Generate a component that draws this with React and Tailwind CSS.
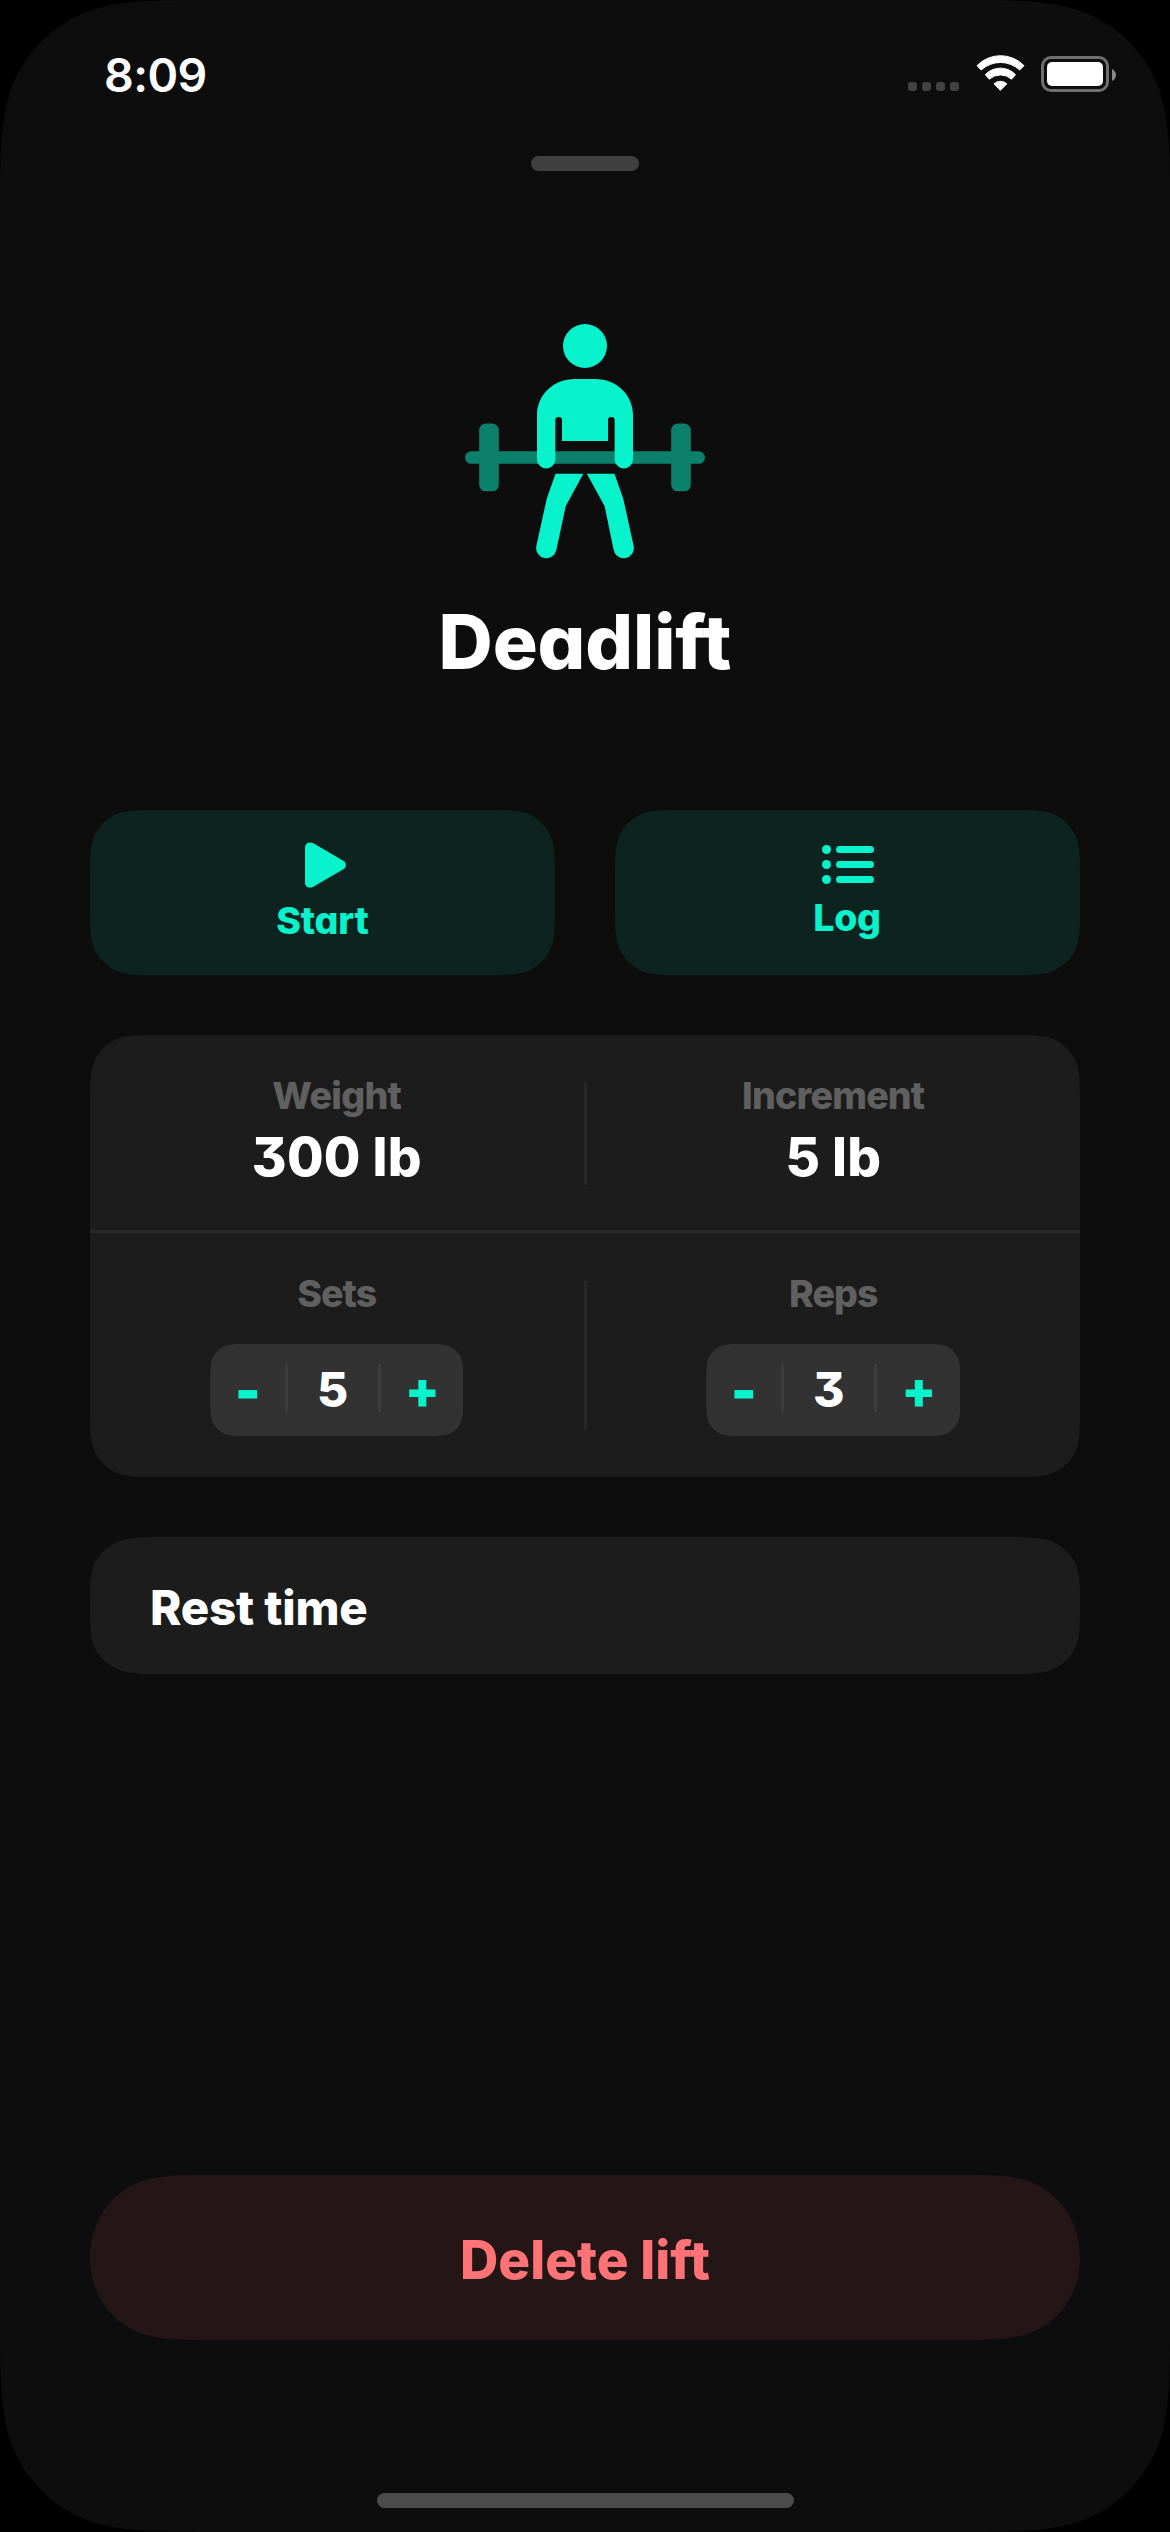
import React from "react";

// Outline of a rectangle with continuous (smoothed) corners.
// With capsule set, only the horizontal side of each corner is smoothed.
function continuousPath(w, h, r, capsule = false) {
  const a = 1.528665 * r;
  const v = capsule ? h / 2 : Math.min(a, h / 2);
  const k = v / a;
  const X = (n) => n * r;
  const Y = (n) => n * r * k;
  const corner = capsule
    ? [[a, 0], [X(1.0885), 0], [X(0.8684), 0], [X(0.6315), r * 0.0749], [X(0.26), r * 0.205], [0, r * 0.56], [0, h / 2]]
    : [
        [a, 0],
        [X(1.08849), 0],
        [X(0.86841), 0],
        [X(0.63149), Y(0.07491)],
        [X(0.37282), Y(0.16906)],
        [X(0.16906), Y(0.37282)],
        [X(0.07491), Y(0.63149)],
        [0, Y(0.86841)],
        [0, Y(1.08849)],
        [0, v],
      ];
  const rev = [...corner].reverse();
  const curve = (pts) => {
    let s = "";
    for (let i = 1; i < pts.length; i += 3) {
      s += "C" + pts.slice(i, i + 3).map(([x, y]) => x.toFixed(2) + " " + y.toFixed(2)).join(" ");
    }
    return s;
  };
  const fx = (p) => p.map(([x, y]) => [w - x, y]);
  const fy = (p) => p.map(([x, y]) => [x, h - y]);
  return (
    `M${w - a} 0` + curve(fx(corner)) + `L${w} ${h - v}` + curve(fx(fy(rev))) +
    `L${a} ${h}` + curve(fy(corner)) + `L0 ${v}` + curve(rev) + "Z"
  );
}

function Smooth({ w, h, r, capsule, as: Tag = "div", className, children }) {
  return (
    <Tag className={className} style={{ width: w, height: h, clipPath: `path("${continuousPath(w, h, r, capsule)}")` }}>
      {children}
    </Tag>
  );
}

function WifiIcon() {
  return (
    <svg className="h-[36px] w-[49px]" viewBox="344 105 147 108" fill="#fff" stroke="#fff" strokeWidth="3" strokeLinejoin="round">
      <path d="M347 137.500A98 98 0 0 1 488 137.500L475 150.500A85 85 0 0 0 359.500 150.500Z" transform="translate(0 -.5)" />
      <path d="M372 164A62 62 0 0 1 462.500 164L450.500 177.500A50 50 0 0 0 384 177.500Z" />
      <path d="M398 191.500A28 28 0 0 1 436.500 191.500L417 211Z" />
    </svg>
  );
}

function StatusBar() {
  return (
    <div className="flex h-[149px] items-center justify-between pr-[54px] pl-[104px]">
      <span className="text-[46.500px] leading-[56px] font-semibold tracking-[-0.6px]">8:09</span>
      <div className="flex items-center">
        <div className="mt-[24px] flex gap-[5px]">
          {[0, 1, 2, 3].map((i) => (
            <span key={i} className="size-[9px] rounded-[3px] bg-[#424242]" />
          ))}
        </div>
        <div className="mt-[-3px] ml-[17px]">
          <WifiIcon />
        </div>
        <div className="-mt-[1px] ml-[16px] h-[36px] w-[68px] rounded-[10px] border-3 border-[#6f6f6f] p-[3px]">
          <div className="h-full rounded-[5px] bg-white" />
        </div>
        <svg className="ml-[3px] h-[12px] w-[4px]" viewBox="0 0 4 12" fill="#878787">
          <path d="M0 0C2.500 1 4 3.500 4 6S2.500 11 0 12Z" />
        </svg>
      </div>
    </div>
  );
}

function DeadliftIcon() {
  return (
    <svg className="h-[236px] w-[240px]" viewBox="75 69 720 708" fill="#08F3CB">
      <g fill="#0B806B">
        <rect x="75" y="453.500" width="720" height="38" rx="19" />
        <rect x="117.500" y="370.500" width="59" height="203.500" rx="20" />
        <rect x="693.500" y="370.500" width="59" height="203.500" rx="20" />
      </g>
      <circle cx="435" cy="138" r="66" />
      <path d="M405 237H465C530 237 579 285 579 345V478A27.500 27.500 0 0 1 524 478V361A10 10 0 0 0 504 361V423H366V361A10 10 0 0 0 346 361V478A27.500 27.500 0 0 1 291 478V345C291 285 340 237 405 237Z" />
      <path d="M346.500 521.500H430L377 619L349 750A30.500 30.500 0 0 1 289 738L320 597Z" />
      <path d="M523.500 521.500H440.500L494 619L521 750A30.500 30.500 0 0 0 581 738L550 597Z" />
    </svg>
  );
}

function PlayIcon() {
  return (
    <svg className="h-[46px] w-[41px]" viewBox="0 0 123 136" fill="#08F3CB">
      <path d="M0 15C0 3 11-4 25 3L115 55C125 61 125 74 115 81L25 133C11 140 0 133 0 121Z" />
    </svg>
  );
}

function ListIcon() {
  return (
    <svg className="h-[39px] w-[52px]" viewBox="0 0 156 117" fill="#08F3CB">
      {[13.5, 58.5, 103.5].map((y) => (
        <g key={y}>
          <circle cx="13.500" cy={y} r="13.500" />
          <rect x="42" y={y - 10.5} width="114" height="21" rx="10.500" />
        </g>
      ))}
    </svg>
  );
}

function Stepper({ value, w }) {
  return (
    <Smooth w={w} h={92} r={24} className="flex items-center bg-[#323232]">
      <button className="flex w-[75px] items-center justify-center text-[#08F3CB]">
        <span className="-mt-[1px] scale-x-[1.1] scale-y-[1.15] text-[50px] leading-[60px] font-black">-</span>
      </button>
      <span className="-mt-[4px] h-[48px] w-[3px] bg-[#3d3d3d]" />
      <span className="-mt-[1px] w-[90px] pr-[1px] text-center text-[48px] leading-[60px] font-extrabold">{value}</span>
      <span className="-mt-[4px] h-[48px] w-[3px] bg-[#3d3d3d]" />
      <button className="flex flex-1 items-center justify-center text-[#08F3CB]">
        <span className="-mt-[1px] text-[50px] leading-[60px] font-black">+</span>
      </button>
    </Smooth>
  );
}

const label = "text-[37.500px] leading-[44px] font-extrabold text-[#606060]";
const amount = "mt-[12px] text-[53px] leading-[54px] font-extrabold tracking-[0.2px]";

export default function App() {
  return (
    <div className="h-[2532px] w-[1170px] overflow-hidden bg-black font-['Inter',sans-serif] text-white [font-feature-settings:'cv09','cv11','calt'_0]">
      <Smooth w={1170} h={2532} r={142} className="flex flex-col bg-[#0D0D0D]">
        <StatusBar />
        <div className="mt-[7px] h-[15px] w-[108px] self-center rounded-full bg-[#404040]" />
        <div className="mt-[152px] self-center">
          <DeadliftIcon />
        </div>
        <h1 className="mt-[37px] text-center text-[75px] leading-[91px] font-extrabold tracking-[-0.1px]">Deadlift</h1>

        <div className="mt-[123px] flex gap-[60px] px-[90px] text-[37.500px] leading-[44px] font-extrabold text-[#08F3CB]">
          <Smooth as="button" w={465} h={165} r={45} className="flex flex-col items-center bg-[#0C231F] pt-[32px]">
            <span className="pl-[6px]">
              <PlayIcon />
            </span>
            <span className="mt-[11px] tracking-[-0.2px]">Start</span>
          </Smooth>
          <Smooth as="button" w={465} h={165} r={45} className="flex flex-col items-center bg-[#0C231F] pt-[35px]">
            <ListIcon />
            <span className="mt-[12px] pr-[1px] tracking-[-0.3px]">Log</span>
          </Smooth>
        </div>

        <div className="mt-[60px] px-[90px]">
          <Smooth w={990} h={442} r={45} className="bg-[#1C1C1C]">
            <div className="flex h-[195px]">
              <div className="flex flex-1 flex-col items-center pt-[39px]">
                <span className={`${label} tracking-[-0.7px]`}>Weight</span>
                <span className={amount}>300 lb</span>
              </div>
              <div className="mt-[48px] h-[102px] w-[3px] bg-[#272727]" />
              <div className="flex flex-1 flex-col items-center pt-[39px]">
                <span className={`${label} tracking-[-0.8px]`}>Increment</span>
                <span className={amount}>5 lb</span>
              </div>
            </div>
            <div className="h-[3px] bg-[#292929]" />
            <div className="flex h-[244px]">
              <div className="flex flex-1 flex-col items-center gap-[28px] pt-[39px]">
                <span className={`${label} tracking-[-1px]`}>Sets</span>
                <Stepper value="5" w={253} />
              </div>
              <div className="mt-[48px] h-[148px] w-[3px] bg-[#272727]" />
              <div className="flex flex-1 flex-col items-center gap-[28px] pt-[39px]">
                <span className={`${label} tracking-[-1px]`}>Reps</span>
                <Stepper value="3" w={254} />
              </div>
            </div>
          </Smooth>
        </div>

        <div className="mt-[60px] px-[90px]">
          <Smooth w={990} h={137} r={50} className="flex items-center bg-[#1C1C1C] px-[60px]">
            <span className="mt-[4px] text-[47.500px] leading-[60px] font-extrabold tracking-[-0.2px]">Rest time</span>
          </Smooth>
        </div>

        <div className="mt-auto px-[90px]">
          <Smooth as="button" w={990} h={165} r={82} capsule className="flex items-center justify-center bg-[#241617] text-[#FF7276]">
            <span className="mt-[4px] text-[53px] leading-[60px] font-extrabold">Delete lift</span>
          </Smooth>
        </div>
        <div className="mt-[153px] mb-[24px] h-[15px] w-[417px] self-center rounded-full bg-[#4B4B4B]" />
      </Smooth>
    </div>
  );
}
